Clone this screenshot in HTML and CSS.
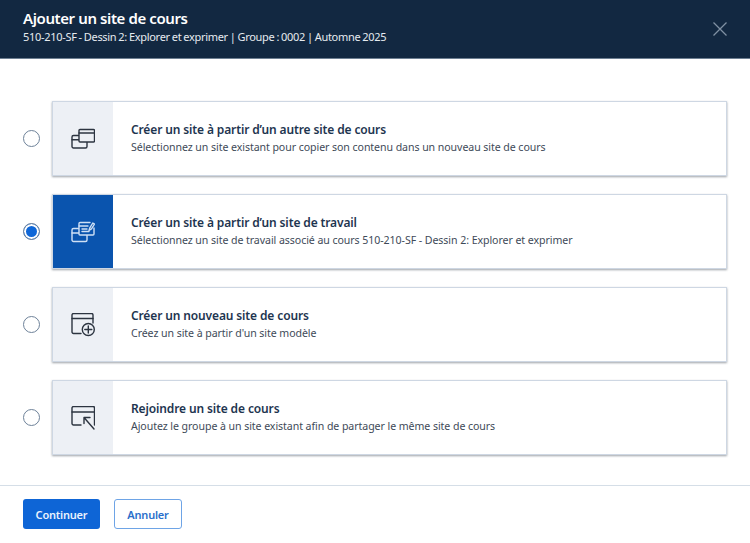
FILE: index.html
```html
<!DOCTYPE html>
<html lang="fr">
<head>
<meta charset="utf-8">
<title>Ajouter un site de cours</title>
<link rel="stylesheet" href="styles.css">
</head>
<body>
<div class="dialog">
  <header class="head">
    <div class="head-text">
      <h1 class="title">Ajouter un site de cours</h1>
      <p class="sub">510-210-SF - Dessin 2: Explorer et exprimer | Groupe : 0002 | Automne 2025</p>
    </div>
    <svg class="close" width="14" height="14" viewBox="0 0 14 14"><path d="M.5.5l13 13M13.5.5l-13 13"/></svg>
  </header>
  <main class="options">
    <div class="row">
      <span class="radio"></span>
      <div class="card">
        <div class="tile">
          <svg class="ico" width="24" height="24" viewBox="0 0 24 24"><rect x="1" y="8.5" width="15" height="12.5" rx="1.5"/><path d="M1 12.8h7"/><rect x="8" y="2.5" width="15.5" height="12.5" rx="1" class="fillback"/><path d="M8 6h15.5"/></svg>
        </div>
        <div class="text">
          <div class="t">Créer un site à partir d’un autre site de cours</div>
          <div class="d">Sélectionnez un site existant pour copier son contenu dans un nouveau site de cours</div>
        </div>
      </div>
    </div>
    <div class="row">
      <span class="radio on"></span>
      <div class="card">
        <div class="tile sel">
          <svg class="ico" width="24" height="24" viewBox="0 0 24 24"><rect x="1" y="8.5" width="15" height="13" rx="1.5"/><path d="M1 13h7"/><path class="fillsel" d="M19 2.5H9a1 1 0 0 0-1 1V14a1 1 0 0 0 1 1h13a1 1 0 0 0 1-1V8"/><path d="M8 6h9M11 9h5M11 11.5h7"/><path d="M18 10.5l.8-2.7 3-4.800 1.700 1.100-3 4.800z"/></svg>
        </div>
        <div class="text">
          <div class="t">Créer un site à partir d’un site de travail</div>
          <div class="d">Sélectionnez un site de travail associé au cours 510-210-SF - Dessin 2: Explorer et exprimer</div>
        </div>
      </div>
    </div>
    <div class="row">
      <span class="radio"></span>
      <div class="card">
        <div class="tile">
          <svg class="ico" width="24" height="24" viewBox="0 0 24 24"><path d="M10 20.5H2.500A1.500 1.500 0 0 1 1 19V2A1.500 1.500 0 0 1 2.500 .5h18A1.500 1.500 0 0 1 22 2v8"/><path d="M1 5.500h21"/><circle cx="17.300" cy="16.500" r="6"/><path d="M17.300 13v7M13.800 16.500h7"/></svg>
        </div>
        <div class="text">
          <div class="t">Créer un nouveau site de cours</div>
          <div class="d">Créez un site à partir d'un site modèle</div>
        </div>
      </div>
    </div>
    <div class="row">
      <span class="radio"></span>
      <div class="card">
        <div class="tile">
          <svg class="ico" width="24" height="24" viewBox="0 0 24 24"><path d="M10 19H2.500A1.500 1.500 0 0 1 1 17.500V2A1.500 1.500 0 0 1 2.500 .5H22A1.500 1.500 0 0 1 23.500 2v17"/><path d="M1 6h22.500"/><path d="M13 11.500L23 23M13 17.500v-6h6"/></svg>
        </div>
        <div class="text">
          <div class="t">Rejoindre un site de cours</div>
          <div class="d">Ajoutez le groupe à un site existant afin de partager le même site de cours</div>
        </div>
      </div>
    </div>
  </main>
  <footer class="foot">
    <button class="btn primary">Continuer</button>
    <button class="btn ghost">Annuler</button>
  </footer>
</div>
</body>
</html>
```
FILE: styles.css
```css
* { box-sizing: border-box; }
html, body { margin: 0; height: 100%; }
body { background: #fff; font-family: "Noto Sans", "Open Sans", sans-serif; color: #1b2f47; overflow: hidden; }
.dialog { width: 750px; height: 543px; display: flex; flex-direction: column; }
.head { height: 59px; background: #122841; border-bottom: 1px solid #6d7f92; padding: 0 23px; display: flex; justify-content: space-between; align-items: center; color: #fff; }
.head-text { margin-bottom: 6px; }
.title { margin: 0; font-size: 15px; line-height: 20px; font-weight: 600; letter-spacing: -.4px; }
.sub { margin: 1px 0 0; font-size: 11px; line-height: 15px; color: #e6ebf0; letter-spacing: -.3px; word-spacing: -.6px; }
.close { stroke: #7f90a3; stroke-width: 1.3; fill: none; }
.options { height: 426px; padding: 42px 23px 0; display: flex; flex-direction: column; gap: 18px; }
.row { display: flex; align-items: center; gap: 12px; }
.radio { width: 17px; height: 17px; border-radius: 50%; border: 1px solid #6e8299; background: #fff; flex: none; }
.radio.on { background: #0f67d8; box-shadow: inset 0 0 0 2px #fff; }
.card { flex: 1; height: 75px; display: flex; align-items: stretch; border: 1px solid #ced7e3; background: #fff; box-shadow: 0 1px 2px rgba(40, 50, 65, .45); }
.tile { width: 60px; flex: none; background: #edf0f5; display: flex; align-items: center; justify-content: center; color: #2c3440; }
.tile.sel { background: #0a54ae; color: #cfe0f5; }
.ico { fill: none; stroke: currentColor; stroke-width: 1.4; stroke-linecap: round; stroke-linejoin: round; }
.fillback { fill: #edf0f5; }
.fillsel { fill: #0a54ae; }
.text { padding: 0 18px 2px; display: flex; flex-direction: column; justify-content: center; }
.t { font-size: 12px; line-height: 17px; font-weight: 600; color: #1e3550; letter-spacing: -.13px; }
.d { font-size: 10.6px; line-height: 16px; margin-top: 1px; color: #3e4a58; letter-spacing: -.07px; }
.foot { flex: 1; border-top: 1px solid #d5dee7; padding: 13px 23px 0; display: flex; gap: 14px; align-items: flex-start; }
.btn { height: 30px; border-radius: 3px; font-family: inherit; font-size: 11px; font-weight: 600; padding: 0; letter-spacing: -.2px; }
.primary { width: 77px; background: #0e65d6; border: 0; color: #eaf2fd; }
.ghost { width: 68px; background: #fff; border: 1px solid #6ea4e6; color: #2a6fcb; }
```
